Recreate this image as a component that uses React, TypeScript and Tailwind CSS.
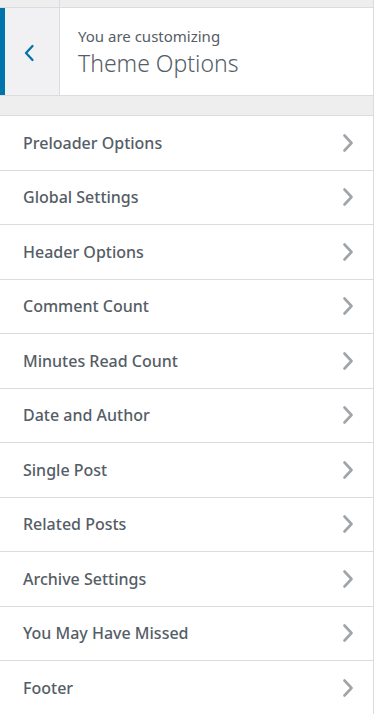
const SECTIONS = [
  "Preloader Options",
  "Global Settings",
  "Header Options",
  "Comment Count",
  "Minutes Read Count",
  "Date and Author",
  "Single Post",
  "Related Posts",
  "Archive Settings",
  "You May Have Missed",
  "Footer",
];

export default function App() {
  return (
    <div
      className="w-[375px] h-[714px] overflow-hidden bg-white"
      style={{ fontFamily: '"Noto Sans", "Open Sans", sans-serif' }}
    >
      <div className="w-[374px] h-full border-r border-[#dcdcde] bg-white">
        {/* top strip */}
        <div className="flex h-[8px] bg-[#eeeeee] border-b border-[#dcdcde]">
          <div className="w-[60px] border-r border-[#dcdcde]" />
        </div>

        {/* panel header */}
        <div className="flex h-[88px] border-b border-[#dcdcde]">
          <button className="w-[60px] shrink-0 flex items-center justify-center bg-[#f1f1f3] border-l-[5px] border-[#0073aa] border-r border-r-[#dcdcde]">
            <svg width="12" height="18" viewBox="0 0 12 18" fill="none" className="mr-[6px] mt-[2px]">
              <path d="M9.5 2 L3 9 L9.5 16" stroke="#0073aa" strokeWidth="2.3" strokeLinecap="round" strokeLinejoin="round" />
            </svg>
          </button>
          <div className="flex-1 pl-[18px] pt-[17px]">
            <p className="text-[15px] leading-[22px] text-[#555d66]">You are customizing</p>
            <h2 className="text-[23px] leading-[32px] font-light text-[#555d66]">Theme Options</h2>
          </div>
        </div>

        {/* gap */}
        <div className="h-[20px] bg-[#eeeeee] border-b border-[#dcdcde]" />

        {/* sections */}
        <ul>
          {SECTIONS.map((s) => (
            <li
              key={s}
              className="flex items-center justify-between h-[54.5px] pl-[23px] pr-[19px] border-b border-[#dcdcde]"
            >
              <span className="text-[16px] font-medium text-[#555d66]">{s}</span>
              <svg width="12" height="18" viewBox="0 0 12 18" fill="none">
                <path d="M2.5 1.5 L9.5 9 L2.5 16.5" stroke="#a0a5aa" strokeWidth="2.6" strokeLinecap="round" strokeLinejoin="round" />
              </svg>
            </li>
          ))}
        </ul>
      </div>
    </div>
  );
}
